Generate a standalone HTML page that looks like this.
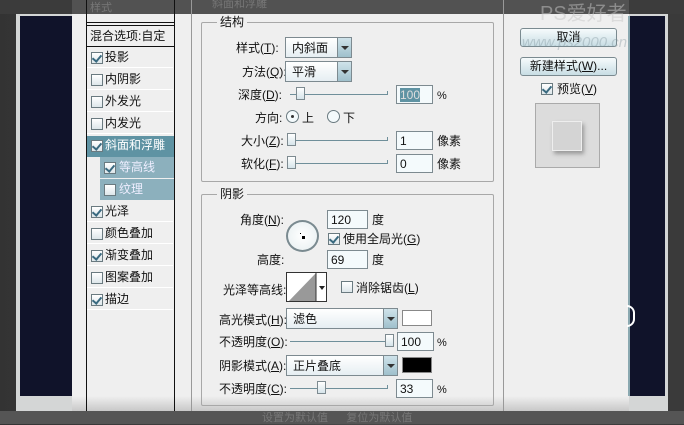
<!DOCTYPE html>
<html><head><meta charset="utf-8"><style>
*{margin:0;padding:0;box-sizing:border-box}
body{width:684px;height:424px;overflow:hidden;background:linear-gradient(90deg,#333 0,#474747 50%,#3a3a3a 100%);font-family:"Liberation Sans","Noto Sans CJK SC",sans-serif;font-size:12px;color:#111;position:relative}
.a{position:absolute}
.t{position:absolute;white-space:nowrap;line-height:14px}
.cb{position:absolute;width:12px;height:12px;border:1px solid #6a7a80;background:linear-gradient(#fff,#dde6ea)}
.cb.on::after{content:"";position:absolute;left:2px;top:0px;width:4px;height:7px;border:solid #3a6a80;border-width:0 2px 2px 0;transform:rotate(40deg)}
.li{position:absolute;left:87px;width:86px;height:21px;border-bottom:1px solid #fff}
.inp{position:absolute;height:19px;border:1px solid #7d8a90;background:#f4fafc;padding:2px 3px;font-size:12px;line-height:14px}
.sel{position:absolute;height:21px;border:1px solid #7d8a90;background:linear-gradient(#fff,#e6eef2);padding:3px 6px;line-height:14px}
.sel i{position:absolute;right:0;top:0;width:14px;height:19px;background:linear-gradient(#cfe3ea,#9fc0cc);border-left:1px solid #7d8a90}
.sel i::after{content:"";position:absolute;left:3px;top:8px;border:4px solid transparent;border-top:4px solid #333}
.sl{position:absolute;height:1px;background:#6f8f9a}
.sl::after{content:"";position:absolute;right:0;top:-3px;width:1px;height:4px;background:#6f8f9a}
.th{position:absolute;width:9px;height:13px;border:1px solid #7d8a90;background:linear-gradient(#fff,#d6e4ea)}
.grp{position:absolute;border:1px solid #a8a8a8;border-radius:2px}
.btn{position:absolute;height:19px;border:1px solid #7a8a90;border-radius:3px;background:linear-gradient(#f6fbfc,#c8dde4);text-align:center;line-height:17px}
u{text-decoration:underline}
</style></head><body>
<!-- outer frame -->
<div class="a" style="left:16px;top:14px;width:652px;height:397px;background:#d4d6d6"></div>
<div class="a" style="left:20px;top:16px;width:645px;height:380px;background:#10132a"></div>
<!-- dialog -->
<div class="a" style="left:72px;top:0;width:557px;height:411px;background:#efefef"></div>
<div class="a" style="left:72px;top:396px;width:557px;height:15px;background:linear-gradient(#efefef,#c8c8c8)"></div>
<div class="a" style="left:628px;top:16px;width:2px;height:380px;background:#8aa8b0"></div>
<!-- top dark strip -->
<div class="a" style="left:0;top:0;width:684px;height:14px;background:rgba(60,60,60,.88)"></div>
<div class="t" style="left:90px;top:1px;color:#777;font-size:11px">样式</div>
<div class="t" style="left:212px;top:-3px;color:#777;font-size:11px">斜面和浮雕</div>
<!-- left list -->
<div class="a" style="left:86px;top:0;width:1px;height:411px;background:#111"></div>
<div class="a" style="left:174px;top:0;width:1px;height:411px;background:#111"></div>
<div class="a" style="left:87px;top:22px;width:87px;height:1px;background:#111"></div>
<div class="a" style="left:87px;top:25px;width:87px;height:1px;background:#111"></div>
<div class="t" style="left:90px;top:29px">混合选项:自定</div>
<div class="a" style="left:87px;top:46px;width:87px;height:1px;background:#111"></div>
<div class="li" style="top:47px"></div><div class="cb on" style="left:91px;top:52px"></div><div class="t" style="left:105px;top:50px">投影</div>
<div class="li" style="top:69px"></div><div class="cb" style="left:91px;top:74px"></div><div class="t" style="left:105px;top:72px">内阴影</div>
<div class="li" style="top:91px"></div><div class="cb" style="left:91px;top:96px"></div><div class="t" style="left:105px;top:94px">外发光</div>
<div class="li" style="top:113px"></div><div class="cb" style="left:91px;top:118px"></div><div class="t" style="left:105px;top:116px">内发光</div>
<div class="a" style="left:87px;top:136px;width:87px;height:21px;background:#5f93a3"></div>
<div class="cb on" style="left:91px;top:140px"></div><div class="t" style="left:105px;top:138px;color:#fff">斜面和浮雕</div>
<div class="a" style="left:87px;top:157px;width:87px;height:44px;background:#efefef"></div>
<div class="a" style="left:100px;top:157px;width:74px;height:21px;background:#8cb0bd"></div>
<div class="a" style="left:100px;top:179px;width:74px;height:21px;background:#8cb0bd"></div>
<div class="cb on" style="left:104px;top:162px"></div><div class="t" style="left:119px;top:160px;color:#eef">等高线</div>
<div class="cb" style="left:104px;top:184px"></div><div class="t" style="left:119px;top:182px;color:#eef">纹理</div>
<div class="li" style="top:201px"></div><div class="cb on" style="left:91px;top:206px"></div><div class="t" style="left:105px;top:204px">光泽</div>
<div class="li" style="top:223px"></div><div class="cb" style="left:91px;top:228px"></div><div class="t" style="left:105px;top:226px">颜色叠加</div>
<div class="li" style="top:245px"></div><div class="cb on" style="left:91px;top:250px"></div><div class="t" style="left:105px;top:248px">渐变叠加</div>
<div class="li" style="top:267px"></div><div class="cb" style="left:91px;top:272px"></div><div class="t" style="left:105px;top:270px">图案叠加</div>
<div class="li" style="top:289px"></div><div class="cb on" style="left:91px;top:294px"></div><div class="t" style="left:105px;top:292px">描边</div>
<!-- main panel borders -->
<div class="a" style="left:191px;top:0;width:1px;height:411px;background:#999"></div>
<div class="a" style="left:503px;top:0;width:1px;height:411px;background:#999"></div>
<!-- structure group -->
<div class="grp" style="left:201px;top:22px;width:293px;height:160px"></div>
<div class="t" style="left:217px;top:15px;background:#efefef;padding:0 3px">结构</div>
<div class="t" style="left:236px;top:41px">样式(<u>T</u>):</div>
<div class="sel" style="left:285px;top:37px;width:67px">内斜面<i></i></div>
<div class="t" style="left:242px;top:65px">方法(<u>Q</u>):</div>
<div class="sel" style="left:285px;top:61px;width:67px">平滑<i></i></div>
<div class="t" style="left:238px;top:88px">深度(<u>D</u>):</div>
<div class="sl" style="left:290px;top:94px;width:98px"></div><div class="th" style="left:296px;top:87px"></div>
<div class="inp" style="left:396px;top:85px;width:37px"><span style="background:#5f93a3;color:#ddd">100</span></div>
<div class="t" style="left:437px;top:89px;font-size:11px">%</div>
<div class="t" style="left:255px;top:111px">方向:</div>
<div class="a" style="left:286px;top:110px;width:13px;height:13px;border:1px solid #6a7a80;border-radius:50%;background:#f4fafc"><div class="a" style="left:4px;top:4px;width:3px;height:3px;background:#333;border-radius:50%"></div></div>
<div class="t" style="left:302px;top:111px">上</div>
<div class="a" style="left:327px;top:110px;width:13px;height:13px;border:1px solid #6a7a80;border-radius:50%;background:#f4fafc"></div>
<div class="t" style="left:343px;top:111px">下</div>
<div class="t" style="left:241px;top:134px">大小(<u>Z</u>):</div>
<div class="sl" style="left:290px;top:140px;width:98px"></div><div class="th" style="left:287px;top:133px"></div>
<div class="inp" style="left:396px;top:131px;width:37px">1</div>
<div class="t" style="left:437px;top:134px">像素</div>
<div class="t" style="left:241px;top:157px">软化(<u>F</u>):</div>
<div class="sl" style="left:290px;top:163px;width:98px"></div><div class="th" style="left:287px;top:156px"></div>
<div class="inp" style="left:396px;top:154px;width:37px">0</div>
<div class="t" style="left:437px;top:157px">像素</div>
<!-- shadow group -->
<div class="grp" style="left:201px;top:194px;width:293px;height:212px"></div>
<div class="t" style="left:217px;top:187px;background:#efefef;padding:0 3px">阴影</div>
<div class="t" style="left:240px;top:213px">角度(<u>N</u>):</div>
<div class="a" style="left:286px;top:220px;width:33px;height:32px;border:2px solid #7a8a90;border-radius:50%;background:radial-gradient(#fff,#e6eef0)"></div>
<div class="a" style="left:302px;top:236px;width:3px;height:3px;background:#000"></div>
<div class="a" style="left:300px;top:233px;width:1px;height:1px;background:#000"></div>
<div class="inp" style="left:327px;top:210px;width:41px">120</div>
<div class="t" style="left:372px;top:213px">度</div>
<div class="cb on" style="left:328px;top:233px"></div>
<div class="t" style="left:343px;top:232px">使用全局光(<u>G</u>)</div>
<div class="t" style="left:257px;top:253px">高度:</div>
<div class="inp" style="left:327px;top:250px;width:41px">69</div>
<div class="t" style="left:372px;top:253px">度</div>
<div class="t" style="left:223px;top:283px">光泽等高线:</div>
<div class="a" style="left:286px;top:272px;width:41px;height:30px;border:1px solid #333;background:#fff;overflow:hidden">
<svg width="41" height="30"><polygon points="0,30 29,0 29,30" fill="#999"/><line x1="29" y1="0" x2="29" y2="30" stroke="#333"/><polygon points="32,13 38,13 35,17" fill="#222"/></svg></div>
<div class="cb" style="left:341px;top:281px"></div>
<div class="t" style="left:356px;top:281px">消除锯齿(<u>L</u>)</div>
<div class="t" style="left:219px;top:313px">高光模式(<u>H</u>):</div>
<div class="sel" style="left:286px;top:308px;width:112px">滤色<i></i></div>
<div class="a" style="left:402px;top:310px;width:30px;height:16px;border:1px solid #888;background:#fff"></div>
<div class="t" style="left:219px;top:335px">不透明度(<u>O</u>):</div>
<div class="sl" style="left:290px;top:341px;width:98px"></div><div class="th" style="left:385px;top:334px"></div>
<div class="inp" style="left:397px;top:332px;width:37px">100</div>
<div class="t" style="left:437px;top:336px;font-size:11px">%</div>
<div class="t" style="left:219px;top:359px">阴影模式(<u>A</u>):</div>
<div class="sel" style="left:286px;top:355px;width:112px">正片叠底<i></i></div>
<div class="a" style="left:402px;top:357px;width:30px;height:16px;border:1px solid #888;background:#000"></div>
<div class="t" style="left:219px;top:382px">不透明度(<u>C</u>):</div>
<div class="sl" style="left:290px;top:388px;width:98px"></div><div class="th" style="left:317px;top:381px"></div>
<div class="inp" style="left:396px;top:379px;width:37px">33</div>
<div class="t" style="left:437px;top:383px;font-size:11px">%</div>
<!-- right panel -->
<div class="btn" style="left:520px;top:28px;width:97px">取消</div>
<div class="btn" style="left:520px;top:57px;width:97px">新建样式(<u>W</u>)...</div>
<div class="cb on" style="left:541px;top:83px"></div>
<div class="t" style="left:557px;top:82px">预览(<u>V</u>)</div>
<div class="a" style="left:535px;top:103px;width:65px;height:65px;border:1px solid #aaa;background:#dcdcdc"></div>
<div class="a" style="left:552px;top:121px;width:30px;height:30px;background:#d4d4d4;border:1px solid #eee;box-shadow:2px 3px 4px #999"></div>
<div class="t" style="left:540px;top:3px;color:rgba(200,200,200,.5);font-size:20px;line-height:22px">PS爱好者</div>
<div class="t" style="left:522px;top:36px;color:rgba(120,140,150,.35);font-size:15px;font-style:italic">www.ps2000.cn</div>
<div class="a" style="left:627px;top:305px;width:8px;height:22px;border:2px solid #fff;border-left:none;border-radius:0 11px 11px 0"></div>
<!-- bottom -->
<div class="a" style="left:0;top:411px;width:684px;height:13px;background:#555"></div>
<div class="t" style="left:262px;top:411px;color:#777;font-size:11px">设置为默认值 &nbsp;&nbsp;&nbsp;&nbsp; 复位为默认值</div>
</body></html>
